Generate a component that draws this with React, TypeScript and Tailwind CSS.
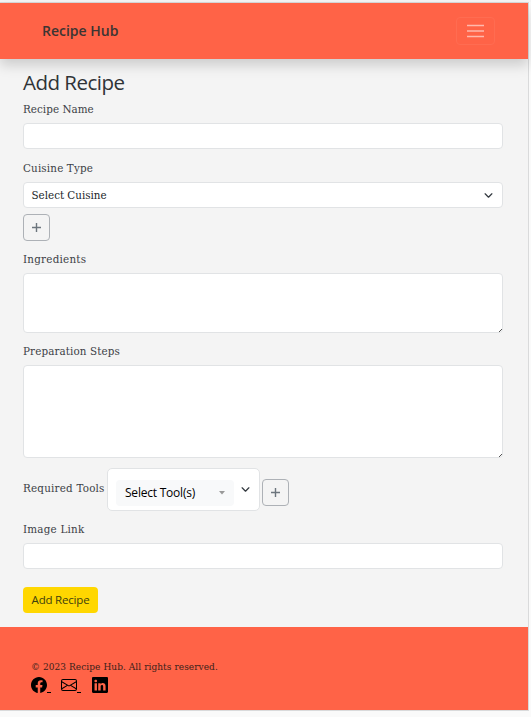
import { ReactNode } from "react";
import { BsEnvelope, BsFacebook, BsLinkedin } from "react-icons/bs";

const serif = "font-['DejaVu_Serif_Condensed','DejaVu_Serif',serif] [font-stretch:condensed]";
const sans = "font-['Open_Sans','Noto_Sans',sans-serif]";

function Label({ children, className = "" }: { children: ReactNode; className?: string }) {
  return (
    <label className={`${serif} block h-4 whitespace-nowrap text-[11.5px] leading-4 text-[#3c4146] ${className}`}>
      {children}
    </label>
  );
}

function Chevron() {
  return (
    <svg width="9" height="9" viewBox="0 0 16 16" fill="none" stroke="#343a40" strokeWidth="2.2" strokeLinecap="round" strokeLinejoin="round">
      <path d="m2 5 6 6 6-6" />
    </svg>
  );
}

function PlusButton() {
  return (
    <button className="flex h-[27px] w-[27px] shrink-0 items-center justify-center rounded-[4px] border border-[#adb1b6]">
      <svg width="9" height="9" viewBox="0 0 9 9" stroke="#6c757d" strokeWidth="1.4">
        <path d="M4.5 0v9M0 4.5h9" />
      </svg>
    </button>
  );
}

function TextArea({ className }: { className: string }) {
  return (
    <div className={`flex items-end justify-end rounded-[4px] border border-[#e1e3e5] bg-white ${className}`}>
      <svg width="3" height="3" viewBox="0 0 3 3" stroke="#555" strokeWidth="1">
        <path d="M0 3 3 0" />
      </svg>
    </div>
  );
}

export default function App() {
  return (
    <div className="h-[717px] w-[531px] overflow-hidden bg-[#fafafa]">
      <div className="h-[2px] bg-[#f5f5f6]" />
      <div className="h-[709px] w-[529px] border-y border-r border-[#d9dadb] bg-[#f4f4f4]">
        <nav className="flex h-[56px] items-center justify-between bg-[#ff6347] pr-[33px] pl-[42px] shadow-[0_6px_12px_rgba(0,0,0,0.17)]">
          <span className={`${sans} whitespace-nowrap text-[14px] leading-5 font-semibold text-[#3b3533]`}>Recipe Hub</span>
          <button className="flex h-[28px] w-[39px] items-center justify-center rounded-[4px] border border-[#ff6c51]">
            <svg width="17" height="14" viewBox="0 0 17 14" stroke="#ffb9ad" strokeWidth="1.7">
              <path d="M0 1.5h17M0 7h17M0 12.5h17" />
            </svg>
          </button>
        </nav>
        <main className="h-[568px] w-[503px] pt-[9px] pl-[23px]">
          <h1 className={`${sans} h-[28px] whitespace-nowrap text-[20.5px] leading-[28px] tracking-[-0.5px] text-[#2f3337]`}>Add Recipe</h1>
          <Label className="mt-[5px] tracking-[0.05px]">Recipe Name</Label>
          <div className="mt-[6px] h-[26px] rounded-[4px] border border-[#e1e3e5] bg-white" />
          <Label className="mt-[11px] tracking-[0.16px]">Cuisine Type</Label>
          <div className="mt-[6px] flex h-[26px] items-center justify-between rounded-[4px] border border-[#e1e3e5] bg-white pr-[9px] pl-[7.5px]">
            <span className={`${serif} text-[11.5px] leading-4 text-[#212529]`}>Select Cuisine</span>
            <Chevron />
          </div>
          <div className="mt-[6px]"><PlusButton /></div>
          <Label className="mt-[10px] tracking-[0.24px]">Ingredients</Label>
          <TextArea className="mt-[6px] h-[60px]" />
          <Label className="mt-[10px] tracking-[0.12px]">Preparation Steps</Label>
          <TextArea className="mt-[6px] h-[93px]" />
          <div className="mt-[10px] flex h-[43px]">
            <Label className="mt-[12px] w-[84px] tracking-[0.22px]">Required Tools</Label>
            <div className="flex h-[43px] w-[153px] rounded-[5px] border border-[#e1e3e5] bg-white pt-[11px] pl-[8px]">
              <div className="flex h-[26px] w-[118px] items-center justify-between rounded-[4px] bg-[#f8f9fa] pr-[8px] pl-[9px]">
                <span className={`${sans} whitespace-nowrap text-[12px] leading-4 tracking-[-0.22px] text-black`}>Select Tool(s)</span>
                <svg width="8" height="4" viewBox="0 0 8 4" fill="#999">
                  <path d="M1 0h6L4 3.5Z" />
                </svg>
              </div>
              <div className="mt-[5px] ml-[7px]"><Chevron /></div>
            </div>
            <div className="mt-[11px] ml-[2px]"><PlusButton /></div>
          </div>
          <Label className="mt-[10px] tracking-[0.22px]">Image Link</Label>
          <div className="mt-[6px] h-[26px] rounded-[4px] border border-[#e1e3e5] bg-white" />
          <button className={`${sans} mt-[18px] flex h-[26px] w-[75px] items-center justify-center rounded-[4px] bg-[#ffd700] whitespace-nowrap text-[11.5px] tracking-[-0.2px] text-[#3d400f]`}>
            Add Recipe
          </button>
        </main>
        <footer className="h-[83px] bg-[#ff6347] pt-[32px] pl-[31px]">
          <p className={`${serif} h-4 whitespace-nowrap text-[10px] leading-4 tracking-[0.06px] text-[#3a1f1a]`}>
            © 2023 Recipe Hub. All rights reserved.
          </p>
          <div className="mt-[2px] flex text-black">
            <a className="flex w-[30px] items-end"><BsFacebook size={16} /><span className="h-px w-[4px] bg-black" /></a>
            <a className="flex w-[31px] items-end"><BsEnvelope size={16} /><span className="h-px w-[4px] bg-black" /></a>
            <a><BsLinkedin size={16} /></a>
          </div>
        </footer>
      </div>
    </div>
  );
}
